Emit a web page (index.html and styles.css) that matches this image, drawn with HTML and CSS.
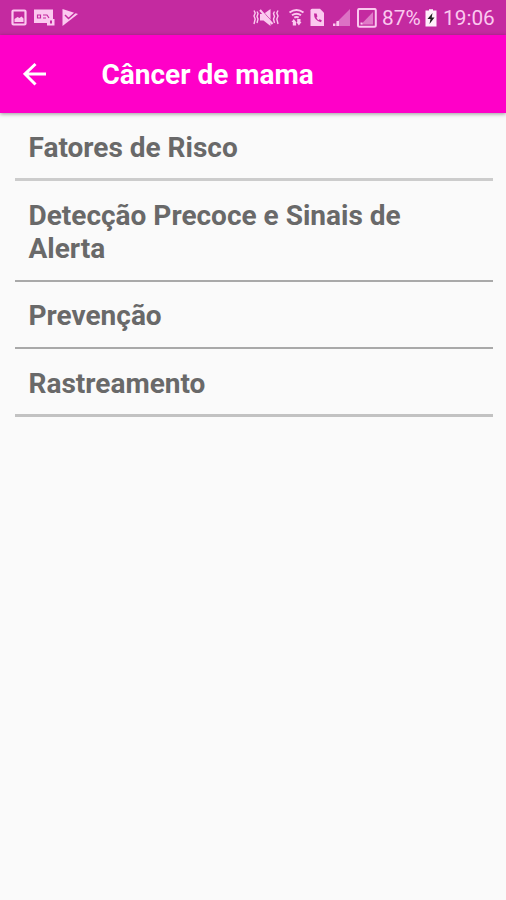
FILE: index.html
```
<!DOCTYPE html>
<html lang="pt-BR">
<head>
<meta charset="utf-8">
<title>Câncer de mama</title>
<link rel="stylesheet" href="styles.css">
</head>
<body>
<div class="status">
  <svg class="notifications" width="68" height="20" viewBox="11 8 68 20">
    <rect x="12.5" y="10.5" width="13" height="14" rx="1" fill="none" stroke="currentColor" stroke-width="2.2"/>
    <path d="M14.5 22v-3l3-2 2 1 2-1.5 2 2V22z" fill="currentColor"/>
    <path d="M34 9.5h19V19h1.5v6.5H47V23H34z" fill="currentColor"/>
    <path d="M37.5 15h3v3h-3zM43 15h4l2 3M43 18h3" fill="none" stroke="#c42aa0" stroke-width="1.2"/>
    <path d="M50 20.5h2v3h-2z" fill="#c42aa0"/>
    <path d="M62.5 9l15.5 5-15.5 12z" fill="currentColor"/>
    <path d="M65 15l3.5 3.5L77 11" fill="none" stroke="#c42aa0" stroke-width="1.5"/>
  </svg>
  <div class="system">
    <svg width="124" height="20" viewBox="253 8 124 20">
      <path d="M260 14h3.5l7-5v17l-7-5.500H260z" fill="currentColor"/>
      <path d="M261.2 9.5l12.5 14" stroke="#c42aa0" stroke-width="1"/>
      <path d="M260 10l12.5 14" stroke="currentColor" stroke-width="2"/>
      <path d="M254 10.5l1.200 2.500-1.200 3 1.200 3-1.200 5M257 11.500l1 2-1 3 1 2.500-1 4M278 10.500l-1.200 2.500 1.200 3-1.200 3 1.200 5M274.500 11.500l-1 2 1 3-1 2.500 1 4" fill="none" stroke="currentColor" stroke-width="1.4"/>
      <path d="M289.5 12.5q7-5 14 0M292 15.3q4.5-3.200 9 0M294.300 17.700q2.200-1.500 4.400 0" fill="none" stroke="currentColor" stroke-width="2"/>
      <path d="M291.5 22l2.300-3 2.300 3v3.500h-3.300V22zM297.200 22v-3h3.300v3h1l-2.600 3.500-2.600-3.500z" fill="currentColor"/>
      <path d="M312 8.800h8l4 4V26H310.500V10.300q0-1.500 1.500-1.500z" fill="currentColor"/>
      <path d="M314 13.500q-.2 7 7 8.700l.8-2-2.300-1-1 1q-1.500-1-2-2.700l.9-1-.8-3z" fill="#c42aa0"/>
      <path d="M350 9v17H333z" fill="currentColor" opacity=".45"/>
      <path d="M333 26v-2.500h2V26zM336.500 26v-5h2.500v5z" fill="currentColor"/>
      <rect x="358" y="8.900" width="17.800" height="17.800" rx="1.500" fill="none" stroke="currentColor" stroke-width="2"/>
      <path d="M373 12v12.500H361z" fill="currentColor" opacity=".5"/>
      <path d="M360.500 24.500v-2h2v2z" fill="currentColor"/>
    </svg>
    <span class="percent">87%</span>
    <svg class="battery" width="12" height="18" viewBox="0 0 12 18">
      <path d="M.5 1.500H4V.3h4v1.200h3.500v16H.5z" fill="#fff0fb"/>
      <path d="M7.500 4L2.500 10h3L4.500 15l5-6.500H6.700z" fill="#202020"/>
    </svg>
    <span class="clock">19:06</span>
  </div>
</div>
<header class="bar">
  <svg width="24" height="24" viewBox="0 0 24 24"><path d="M23 12H2M12.500 2L2 12l10.500 10.500" fill="none" stroke="#fff" stroke-width="3"/></svg>
  <h1>Câncer de mama</h1>
</header>
<ul class="topics">
  <li class="first">Fatores de Risco</li>
  <li>Detecção Precoce e Sinais de Alerta</li>
  <li class="short">Prevenção</li>
  <li class="last">Rastreamento</li>
</ul>
</body>
</html>
```
FILE: styles.css
```
* { box-sizing: border-box; }
body {
  margin: 0;
  min-height: 900px;
  background: #fafafa;
  font-family: Roboto, sans-serif;
}
svg { display: block; flex: none; }
.status {
  display: flex;
  justify-content: space-between;
  align-items: center;
  height: 35px;
  padding: 1px 11px 0;
  background: #c42aa0;
  color: #fbc9ef;
}
.system { display: flex; align-items: center; }
.percent, .clock {
  font-size: 20.8px;
  line-height: 24px;
}
.percent { width: 39px; margin-left: 5px; white-space: nowrap; }
.battery { margin-left: 4px; }
.clock { width: 52px; margin-left: 6px; white-space: nowrap; }
.bar {
  display: flex;
  align-items: center;
  height: 78px;
  padding-left: 23px;
  background: #ff00c8;
  color: #fff;
  box-shadow: 0 1px 4px rgba(0, 0, 0, .4);
}
.bar svg { margin-bottom: 1px; }
h1 {
  margin: 0 0 0 54.5px;
  font-size: 28px;
  line-height: 33px;
  font-weight: 700;
}
.topics {
  margin: 0;
  padding: 0 13px 0 15px;
  list-style: none;
  color: #696969;
  font-size: 28px;
  line-height: 33px;
  font-weight: 700;
}
.topics li {
  padding: 18px 60px 15px 13.5px;
  border-bottom: 2px solid #a9a9a9;
}
.topics .first {
  padding-bottom: 14px;
  border-bottom: 3px solid #ccc;
}
.topics .short { padding-top: 17px; }
.topics .last {
  padding-bottom: 14px;
  border-bottom: 3px solid #c2c2c2;
}
```
